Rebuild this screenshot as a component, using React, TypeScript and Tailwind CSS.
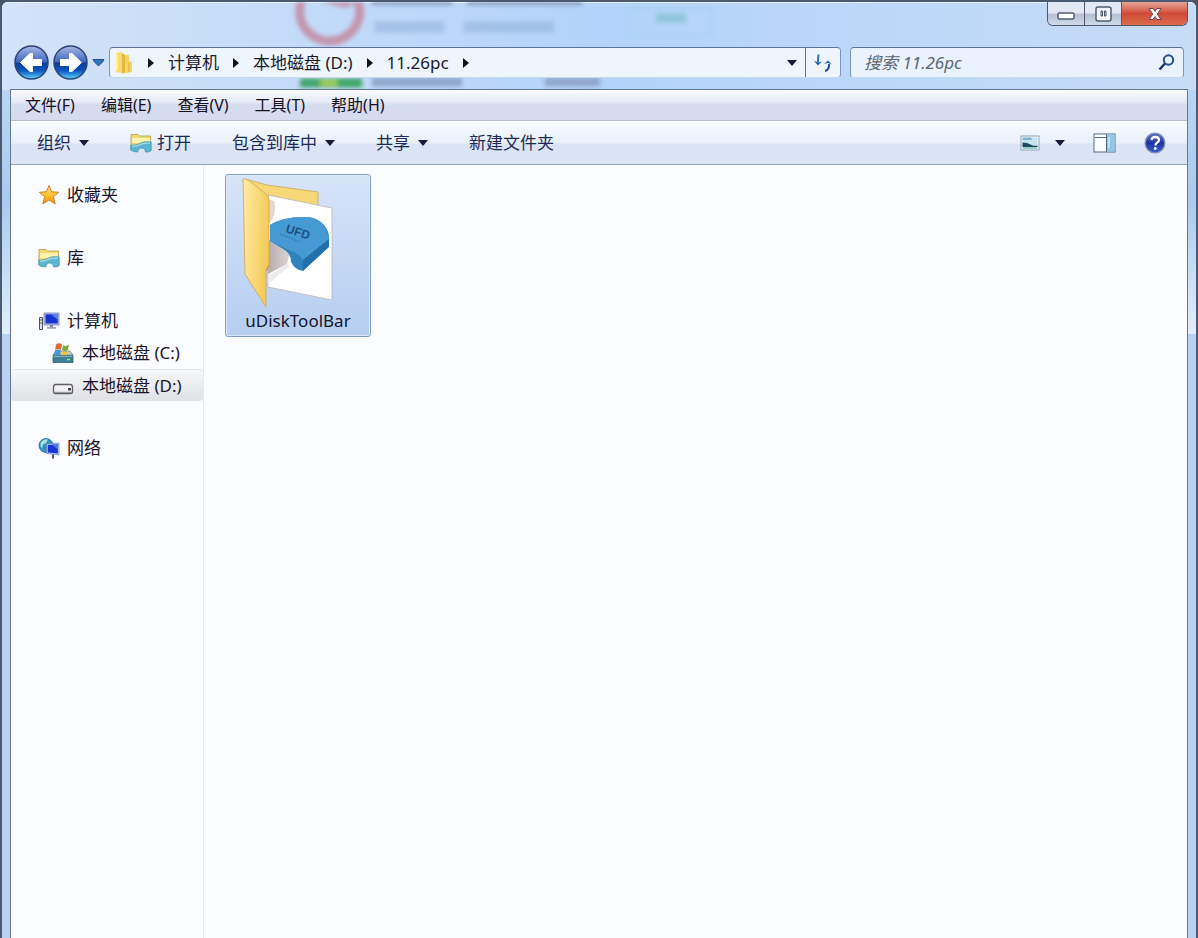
import React from 'react';

const MENU_ITEMS = ['文件(F)', '编辑(E)', '查看(V)', '工具(T)', '帮助(H)'];
const BREADCRUMBS = ['计算机', '本地磁盘 (D:)', '11.26pc'];

function Caret({ className = '' }: { className?: string }) {
  return (
    <svg width="10" height="6" viewBox="0 0 10 6" className={className} aria-hidden="true">
      <path d="M0 0h10L5 6z" fill="#141c3a" />
    </svg>
  );
}

function LibraryIcon() {
  return (
    <svg width="22" height="20" viewBox="0 0 22 20" aria-hidden="true">
      <path d="M1 1.500h7l1.500 1.500H20.500V13H1z" fill="#f3d973" stroke="#b89a45" strokeWidth="0.8" />
      <path d="M2 5h18v5H2z" fill="#fdf1ae" />
      <path
        d="M0.700 12c4 .5 7-.5 10-2s6-1.500 10.500-1v8.500q-2 2-5.500 1.500c-.5-3-2-4-4-4s-3.500 1-4 4q-4.500 0-7-2z"
        fill="#5cb5d0"
        stroke="#3c8ca8"
        strokeWidth="0.7"
      />
      <path d="M2 13.200c4 .2 6-.8 9-2s5-1.400 9-1" fill="none" stroke="#a5dce9" strokeWidth="1.300" />
    </svg>
  );
}

function StarIcon() {
  return (
    <svg width="22" height="22" viewBox="0 0 22 22" aria-hidden="true">
      <defs>
        <linearGradient id="star" x1="0" y1="0" x2="0" y2="1">
          <stop offset="0" stopColor="#ffe680" />
          <stop offset="0.55" stopColor="#ffbf2a" />
          <stop offset="1" stopColor="#ee8a12" />
        </linearGradient>
      </defs>
      <path
        d="M11 1.500l2.700 6.300 7 .5-5.400 4.400 1.900 7.300-6.200-4.100-6.200 4.100 1.900-7.300L1.300 8.300l7-.5z"
        fill="url(#star)"
        stroke="#d3801f"
        strokeWidth="1"
        strokeLinejoin="round"
      />
    </svg>
  );
}

function ComputerIcon() {
  return (
    <svg width="22" height="20" viewBox="0 0 22 20" aria-hidden="true">
      <path d="M1.500 6.500h3v12h-3z" fill="#dfe3ea" stroke="#4c5263" strokeWidth="1" />
      <path d="M2 9h2M2 12h2" stroke="#4c5263" />
      <path d="M6 2h15v12H6z" fill="#b6c4e8" stroke="#6f7fb0" strokeWidth="0.8" />
      <path d="M7.500 3.300h12.300v9.200H7.500z" fill="#1633d2" />
      <path d="M13 3.300h6.800v5.500z" fill="#5b84f2" />
      <path d="M12 14h3v2h-3z" fill="#7b86a3" />
      <path d="M9 16h9v1.800H9z" fill="#a0a5b8" />
    </svg>
  );
}

function SystemDriveIcon() {
  return (
    <svg width="22" height="22" viewBox="0 0 22 22" aria-hidden="true">
      <path d="M1 13l3-4h14l3 4z" fill="#c2d2c9" stroke="#5c7782" strokeWidth="0.7" />
      <path d="M4 2.500q3-2.500 6 0l-1 5.500q-3-2-6 0z" fill="#df6a35" />
      <path d="M11 3q3 2 6-.5l-1.200 5.500q-3 2-5.800 0z" fill="#7fae3b" />
      <path d="M3 8.500q3-2 6 0l-1 4.500H2z" fill="#4f93cf" />
      <path d="M10 9q3 2 5.800 0l-1 4.500H9z" fill="#f1c83a" />
      <path d="M1 13.500h20v7H1z" fill="#3d8093" stroke="#315e70" strokeWidth="0.8" />
      <path d="M1.500 14.300h19" stroke="#8fc2c8" />
      <path d="M15 17.500h3" stroke="#a3e07a" strokeWidth="1.500" />
    </svg>
  );
}

function DriveIcon() {
  return (
    <svg width="22" height="20" viewBox="0 0 22 20" aria-hidden="true">
      <path
        d="M3.500 8.500h15q2 0 2 3v4q0 2-2 2h-15q-2 0-2-2v-3.500q0-3.500 2-3.500z"
        fill="#f2f2f4"
        stroke="#5d5e66"
        strokeWidth="1.300"
      />
      <path d="M2 16.300h18" stroke="#8b8c94" strokeWidth="1" />
      <path d="M16 12h3v2.500h-3z" fill="#42444c" />
    </svg>
  );
}

function NetworkIcon() {
  return (
    <svg width="22" height="22" viewBox="0 0 22 22" aria-hidden="true">
      <circle cx="8" cy="8.500" r="7" fill="#2f93c4" stroke="#1c6a98" strokeWidth="0.8" />
      <path d="M3 5q3-3.500 7-2.500L8 6 5 7.500l-1 4Q1.500 8.500 3 5z" fill="#a6e1dc" />
      <path d="M8.500 7l12.500-1v12l-12.500-1.500z" fill="#c4d4f2" stroke="#5470ad" strokeWidth="0.6" />
      <path d="M9.700 8.100l10.200-.8v9.300l-10.200-1.200z" fill="#1736d4" />
      <path d="M14 7.700l5.900-.4v5.200z" fill="#4c78ef" />
      <path d="M15 17.500v4" stroke="#3f5488" strokeWidth="2" />
    </svg>
  );
}

function SmallFolderIcon() {
  return (
    <svg width="20" height="24" viewBox="0 0 20 24" aria-hidden="true">
      <path d="M2 2l6-1v21l-6-1z" fill="#f7dc6b" />
      <path d="M8 2l3 1.500v18L8 23z" fill="#e3b840" />
      <path d="M11 4h4v9h-4z" fill="#f4d45e" />
      <path d="M11 12l7-2v11l-7 1.500z" fill="#f5d769" />
      <path d="M15 11v10" stroke="#dcae40" />
      <path d="M3 3.500v16" stroke="#fdf3b4" strokeWidth="1.500" />
    </svg>
  );
}

function UfdFolderIcon() {
  return (
    <svg width="92" height="132" viewBox="0 0 92 132" aria-hidden="true">
      <defs>
        <linearGradient id="flap" x1="0" y1="0" x2="1" y2="0.300">
          <stop offset="0" stopColor="#ffeca6" />
          <stop offset="1" stopColor="#f4cb59" />
        </linearGradient>
        <linearGradient id="plug" x1="0" y1="0" x2="1" y2="0">
          <stop offset="0" stopColor="#b5adab" />
          <stop offset="1" stopColor="#ddd6d4" />
        </linearGradient>
      </defs>
      <path d="M3 2l22 6 51 7v18L26 40z" fill="#f7d878" stroke="#cfa653" strokeWidth="0.800" />
      <path d="M26 18l64 13v92l-64-13z" fill="#fff" stroke="#b7b4bb" strokeWidth="0.800" />
      <path d="M26 22l6 2q4 13-6 24z" fill="#e6d5ca" />
      <path d="M26 62l22 14-3 11-19 10z" fill="url(#plug)" />
      <path d="M26 99l19-12 3 2-22 18z" fill="#eeebee" />
      <path d="M28 48q14-9 38-8 10 1 16 8 6 7 5 16L61 94q-8-1-12-9 0-9-8-13l-13-8z" fill="#2f82c0" />
      <path d="M28 48q14-9 38-8 10 1 15 8 5 7 6 14L61 83q-3-6-14-10l-19-9z" fill="#469ad4" />
      <path d="M61 83l26-21v8L61 94z" fill="#236fa9" />
      <text
        x="43"
        y="55"
        transform="rotate(18 43 55)"
        fontSize="12"
        fontWeight="700"
        fill="#1b5385"
        className="font-['Liberation_Sans']"
      >
        UFD
      </text>
      <path d="M38 57l20 8" stroke="#2b6fa5" strokeDasharray="2 1" />
      <path d="M1 2q2-1 5 1l18 14q3 2 3 6v64l-3 6v37L3 97z" fill="url(#flap)" stroke="#d0a54b" strokeWidth="0.800" />
      <path d="M24 94l3-6" stroke="#c6983f" strokeWidth="1" />
    </svg>
  );
}

function NavButton({ label, back = false }: { label: string; back?: boolean }) {
  const id = back ? 'nav-back' : 'nav-forward';
  return (
    <button aria-label={label} className="size-[35px] shrink-0">
      <svg width="35" height="35" viewBox="0 0 35 35" aria-hidden="true">
        <defs>
          <linearGradient id={id} x1="0" y1="0" x2="0" y2="1">
            <stop offset="0" stopColor="#a9b9e6" />
            <stop offset="0.480" stopColor="#3f66bf" />
            <stop offset="0.520" stopColor="#0b3a9d" />
            <stop offset="0.750" stopColor="#0d57c0" />
            <stop offset="1" stopColor="#5fd3fa" />
          </linearGradient>
        </defs>
        <circle cx="17.500" cy="17.500" r="16.500" fill={`url(#${id})`} stroke="#2c4374" strokeWidth="1.500" />
        <path
          d={
            back
              ? 'M6.500 17.500L16 8.500h2.500v6h9v6h-9v6H16z'
              : 'M28.500 17.500L19 8.500h-2.500v6h-9v6h9v6H19z'
          }
          fill="#fff"
          stroke="#fff"
          strokeLinejoin="round"
        />
      </svg>
    </button>
  );
}

function GlassBackdrop() {
  return (
    <div className="absolute inset-x-0 top-0 h-[88px] overflow-hidden" aria-hidden="true">
      <svg width="800" height="88" viewBox="0 0 800 88" className="blur-[2px]">
        <path d="M303 -8a30 30 0 1 0 50 1q-4 7-10 8l-22-5" fill="none" stroke="#c495ad" strokeWidth="9" />
        <path d="M370 0h80M465 0h115" stroke="#71839f" strokeWidth="5" />
        <path d="M372 25h70M462 25h90" stroke="#93b2da" strokeWidth="11" opacity="0.600" />
        <rect x="625" y="6" width="84" height="27" fill="none" stroke="#a4d2ee" strokeWidth="2" />
        <path d="M654 16h30" stroke="#86c4d3" strokeWidth="9" opacity="0.800" />
        <path d="M298 81h62" stroke="#3fa568" strokeWidth="9" />
        <path d="M318 81h18" stroke="#9ccb55" strokeWidth="7" />
        <path d="M370 80h90M543 80h55" stroke="#8fa6cb" strokeWidth="9" />
      </svg>
    </div>
  );
}

function TitleBar() {
  const base =
    'flex items-center justify-center bg-linear-to-b from-[#e3e9f4] from-45% via-[#b4bfd3] via-55% to-[#cfdaea]';
  return (
    <header className="flex h-[43px] items-start justify-end pr-2">
      <div className="flex h-6 overflow-hidden rounded-b-md border border-t-0 border-[#4e586e]">
        <button aria-label="最小化" className={`${base} w-[37px] border-r border-[#4e586e] pt-1`}>
          <svg width="18" height="8" viewBox="0 0 18 8" aria-hidden="true">
            <rect x="1" y="1" width="16" height="6" rx="1.500" fill="#fff" stroke="#525c74" strokeWidth="1.500" />
          </svg>
        </button>
        <button aria-label="还原" className={`${base} w-[37px] border-r border-[#4e586e]`}>
          <svg width="17" height="16" viewBox="0 0 17 16" aria-hidden="true">
            <rect x="1" y="1" width="15" height="14" rx="2" fill="#f3f5fa" stroke="#525c74" strokeWidth="1.500" />
            <path d="M6 5v5M6 5h1.500v5H6M11 5v5M11 5H9.500v5H11" stroke="#454e68" strokeWidth="1" fill="none" />
          </svg>
        </button>
        <button
          aria-label="关闭"
          className="flex w-[65px] items-center justify-center bg-linear-to-b from-[#e5a397] from-0% via-[#cf4a35] via-50% to-[#dc6a4c]"
        >
          <svg width="16" height="14" viewBox="0 0 16 14" aria-hidden="true">
            <path d="M2 1.500h4L8 4.500l2-3h4L10.300 7l3.700 5.500h-4L8 9.500l-2 3H2L5.700 7z" fill="#fff" stroke="#74404a" />
          </svg>
        </button>
      </div>
    </header>
  );
}

function AddressRow() {
  return (
    <div className="mx-3 mb-[9px] flex h-[35px] items-center">
      <NavButton label="后退" back />
      <div className="w-1" />
      <NavButton label="前进" />
      <button aria-label="最近的位置" className="flex w-[21px] shrink-0 justify-center">
        <svg width="13" height="9" viewBox="0 0 13 9" aria-hidden="true">
          <path d="M1 1.500h11L10.500 4 6.500 8 2.500 4z" fill="#2c78bd" stroke="#2d4d7e" strokeLinejoin="round" />
        </svg>
      </button>

      <div className="flex h-[31px] min-w-0 flex-1 rounded-sm border border-[#7c95b8] border-b-[#c5d8ee] border-t-[#5b7396] bg-[#eef5fd]">
        <nav aria-label="地址" className="flex min-w-0 flex-1 items-center pl-1 text-[#1a1a2c]">
          <SmallFolderIcon />
          {BREADCRUMBS.map((crumb) => (
            <React.Fragment key={crumb}>
              <Separator />
              <a href="#" className="whitespace-nowrap">
                {crumb}
              </a>
            </React.Fragment>
          ))}
          <Separator />
        </nav>
        <button aria-label="以前的位置" className="flex w-[26px] items-center justify-center">
          <Caret />
        </button>
        <button aria-label="刷新" className="flex w-[35px] items-center justify-center border-l border-[#5b7396]">
          <svg width="20" height="18" viewBox="0 0 20 18" fill="none" aria-hidden="true">
            <path d="M5.500 0.500L4.800 8" stroke="#2f74b5" strokeWidth="2" />
            <path d="M0.500 6.500q4 3 8.500 1L5 11.500z" fill="#2466ad" />
            <path d="M12 17q4.500-1 4-7" stroke="#234f93" strokeWidth="2" />
            <path d="M10.500 10.500q4-3 8.500 0L15 6.500z" fill="#2a62a6" />
          </svg>
        </button>
      </div>

      <form
        role="search"
        className="ml-[9px] flex h-[31px] w-[334px] items-center rounded-sm border border-[#7c95b8] border-b-[#c5d8ee] border-t-[#5b7396] bg-[#eaf3fd] pl-[13px] pr-2"
      >
        <input
          type="text"
          aria-label="搜索"
          placeholder="搜索 11.26pc"
          className="min-w-0 flex-1 bg-transparent italic outline-none placeholder:text-[#5f6675]"
        />
        <button type="button" aria-label="开始搜索">
          <svg width="17" height="17" viewBox="0 0 17 17" fill="none" aria-hidden="true">
            <circle cx="10.500" cy="6" r="4.700" stroke="#254f8c" strokeWidth="2" />
            <path d="M7 9.500L1.500 15.500" stroke="#1c3565" strokeWidth="2.500" />
          </svg>
        </button>
      </form>
    </div>
  );
}

function Separator() {
  return (
    <span className="flex w-[34px] shrink-0 justify-center">
      <svg width="6" height="10" viewBox="0 0 6 10" aria-hidden="true">
        <path d="M0 0v10l6-5z" fill="#11111d" />
      </svg>
    </span>
  );
}

function MenuBar() {
  return (
    <nav
      aria-label="菜单"
      className="flex h-[31px] items-center gap-[26px] border-b border-[#b3bdd3] bg-linear-to-b from-[#fafbff] from-0% via-[#e6eaf6] via-40% to-[#d5dcf0] to-50% pl-[14px] text-base text-[#16101f]"
    >
      {MENU_ITEMS.map((item) => (
        <button key={item}>{item}</button>
      ))}
    </nav>
  );
}

function Toolbar() {
  return (
    <div className="flex h-11 items-center gap-[41px] border-b border-[#8fa3bf] bg-linear-to-b from-[#fafcff] from-0% via-[#e8f0fb] via-50% to-[#dae4f4] to-55% pl-[26px] pr-[21px] text-[#1e2a56]">
      <button className="flex items-center gap-2">
        组织
        <Caret />
      </button>
      <button className="flex items-center gap-[5px]">
        <LibraryIcon />
        打开
      </button>
      <button className="flex items-center gap-2">
        包含到库中
        <Caret />
      </button>
      <button className="flex items-center gap-2">
        共享
        <Caret />
      </button>
      <button>新建文件夹</button>

      <div className="ml-auto flex items-center gap-7">
        <div className="flex items-center gap-[15px]">
          <button aria-label="更改视图">
            <svg width="20" height="16" viewBox="0 0 20 16" aria-hidden="true">
              <rect x="1" y="1" width="18" height="14" fill="#f4fafd" stroke="#8ba4ba" />
              <path d="M2.500 2.500h15v11h-15z" fill="#c4e4f0" />
              <path d="M2.500 2.500h9v2.500h-9z" fill="#7fb4d1" />
              <path d="M2.500 7.500q5 0 8 2t7 1v1.500h-15z" fill="#1c4c60" />
              <path d="M3 13h14" stroke="#63b09d" />
            </svg>
          </button>
          <button aria-label="更多选项">
            <Caret />
          </button>
        </div>
        <button aria-label="显示预览窗格">
          <svg width="23" height="20" viewBox="0 0 23 20" aria-hidden="true">
            <rect x="1" y="1" width="21" height="18" fill="#fcfdff" stroke="#54688b" />
            <path d="M14 1.500h7.500v17H14z" fill="#8dc9e7" />
            <path d="M13.500 1v18M2 4.500h11" stroke="#54688b" />
            <path d="M16 4v11" stroke="#c7e9f7" strokeWidth="1.500" />
          </svg>
        </button>
        <button aria-label="获取帮助">
          <svg width="22" height="22" viewBox="0 0 22 22" aria-hidden="true">
            <defs>
              <linearGradient id="help" x1="0" y1="0" x2="0" y2="1">
                <stop offset="0" stopColor="#5a74c6" />
                <stop offset="0.500" stopColor="#1c33a0" />
                <stop offset="1" stopColor="#3a66cf" />
              </linearGradient>
            </defs>
            <circle cx="11" cy="11" r="9.800" fill="url(#help)" stroke="#7f8cb4" strokeWidth="1.300" />
            <path
              d="M7.500 8q.5-3 4-3 3.500.2 3.500 3 0 1.700-2 2.800-1.500.9-1.500 2.700"
              fill="none"
              stroke="#fff"
              strokeWidth="2.300"
            />
            <circle cx="11.300" cy="16.500" r="1.400" fill="#fff" />
          </svg>
        </button>
      </div>
    </div>
  );
}

interface SidebarItemProps {
  icon: React.ReactNode;
  label: string;
  nested?: boolean;
  selected?: boolean;
}

function SidebarItem({ icon, label, nested = false, selected = false }: SidebarItemProps) {
  return (
    <a
      href="#"
      aria-current={selected ? 'page' : undefined}
      className={`flex h-8 items-center whitespace-nowrap ${nested ? 'gap-2 pl-[41px]' : 'gap-[7px] pl-[27px]'} ${
        selected
          ? 'rounded-sm border-t border-[#e3e5ea] bg-linear-to-b from-[#f6f7f9] to-[#dfe1e5]'
          : ''
      }`}
    >
      {icon}
      {label}
    </a>
  );
}

function Sidebar() {
  return (
    <aside className="flex w-[193px] shrink-0 flex-col gap-[31px] border-r border-[#e3e9f3] pt-[14px] text-[#1b1428]">
      <SidebarItem icon={<StarIcon />} label="收藏夹" />
      <SidebarItem icon={<LibraryIcon />} label="库" />
      <div>
        <SidebarItem icon={<ComputerIcon />} label="计算机" />
        <SidebarItem icon={<SystemDriveIcon />} label="本地磁盘 (C:)" nested />
        <SidebarItem icon={<DriveIcon />} label="本地磁盘 (D:)" nested selected />
      </div>
      <SidebarItem icon={<NetworkIcon />} label="网络" />
    </aside>
  );
}

export default function App() {
  return (
    <div className="bg-[#4a5366] font-['Noto_Sans','Noto_Sans_CJK_SC',sans-serif] text-[17px] leading-6">
      <div className="relative flex min-h-screen flex-col rounded-t-lg border-x-2 border-t-2 border-[#4a5a72] bg-[#b9d1f3]">
        {/* lighter reflection running down both side borders */}
        <div className="absolute inset-x-0 top-0 h-[332px] rounded-t-md bg-linear-to-b from-[#c7ddf8] from-0% via-[#a9cbef] via-60% to-[#e3edfa]" />
        <div className="absolute inset-x-0 top-0 h-[88px] rounded-t-md border-t border-[#e6f1fd] bg-linear-to-r from-[#d3e3f8] from-0% via-[#b3d3fa] via-50% to-[#c6dcf7]" />
        <GlassBackdrop />

        <div className="relative flex flex-1 flex-col">
          <TitleBar />
          <AddressRow />
          <div className="mx-2 flex flex-1 flex-col border-x border-t border-[#66788f] bg-[#fbfcff]">
            <MenuBar />
            <Toolbar />
            <div className="flex flex-1">
              <Sidebar />
              <main className="flex-1 pl-[21px] pt-[9px]">
                <button className="flex h-[163px] w-[146px] flex-col items-center rounded-[3px] border border-[#7f9fc4] bg-linear-to-b from-[#d6e4f8] to-[#b5cef0] pt-[2px] text-[#14142c] shadow-[inset_0_0_0_1px_#dce9fa]">
                  <span className="pr-5">
                    <UfdFolderIcon />
                  </span>
                  uDiskToolBar
                </button>
              </main>
            </div>
          </div>
        </div>
      </div>
    </div>
  );
}
